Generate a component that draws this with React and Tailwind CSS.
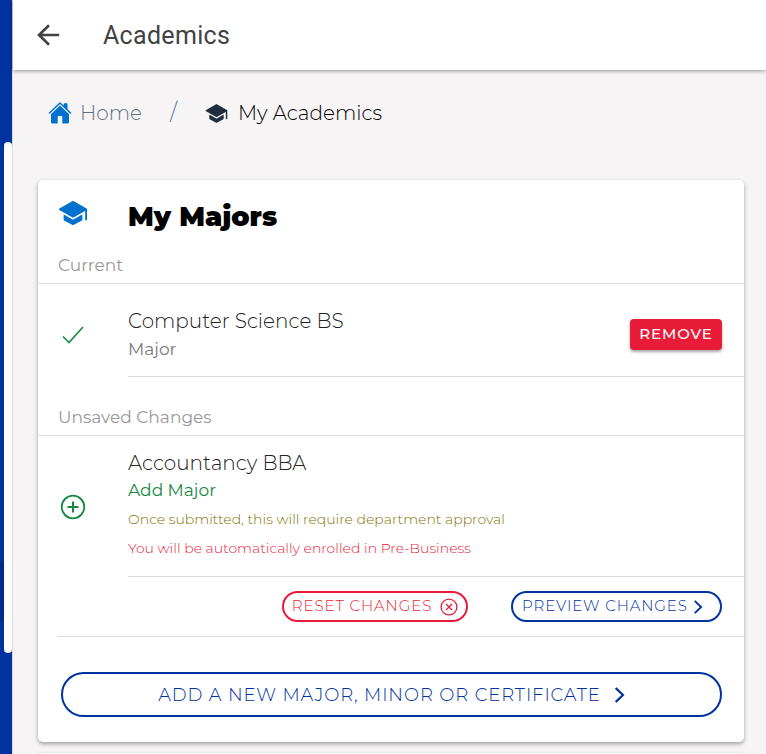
import { IoHome, IoSchool } from 'react-icons/io5';

function ArrowBack() {
  return (
    <svg viewBox="0 0 24 22" className="h-[22px] w-6" fill="none" stroke="currentColor" strokeWidth="2.6">
      <path d="M22.2 11H2M12 1.2L2 11l10 9.8" />
    </svg>
  );
}

function Chevron({ className }) {
  return (
    <svg viewBox="0 0 10 16" className={className} fill="none" stroke="currentColor" strokeWidth="2.2" strokeLinecap="square">
      <path d="M1.5 1.8L8 8l-6.5 6.2" />
    </svg>
  );
}

function Checkmark() {
  return (
    <svg viewBox="0 0 22 18" className="ml-[2px] h-[18px] w-[22px]" fill="none" stroke="currentColor" strokeWidth="1.6">
      <path d="M1 10.5l6 6L21 1" />
    </svg>
  );
}

function AddCircle() {
  return (
    <svg viewBox="0 0 26 26" className="size-[26px]" fill="none" stroke="currentColor" strokeWidth="1.8">
      <circle cx="13" cy="13" r="11.3" />
      <path d="M13 7.5v11M7.5 13h11" strokeWidth="2" />
    </svg>
  );
}

function CloseCircle() {
  return (
    <svg viewBox="0 0 18 18" className="size-[18px]" fill="none" stroke="currentColor" strokeWidth="1.3">
      <circle cx="9" cy="9" r="7.9" />
      <path d="M6 6l6 6M12 6l-6 6" />
    </svg>
  );
}

function Divider({ title }) {
  return (
    <h3 className="flex h-[59px] items-end border-b border-[#dcdcdc] px-5 pb-1 text-[17px] leading-7 font-normal text-[#999]">
      {title}
    </h3>
  );
}

function Item({ icon, children }) {
  return (
    <li className="flex items-center pl-5">
      <span className="flex w-[70px] shrink-0 pl-[2px] text-[#168740]">{icon}</span>
      <div className="flex grow items-center justify-between border-b border-[#dcdcdc] pr-[22px]">{children}</div>
    </li>
  );
}

export default function App() {
  return (
    <div className="flex h-screen overflow-hidden bg-[#f6f4f5] font-['Montserrat','Inter',sans-serif] font-light text-[#222]">
      <aside className="relative w-[13px] shrink-0 border-r border-[#dcdcdc] bg-[#0032a0]">
        <div className="mt-[561px] h-[60px] bg-[#002b88]" />
        <div className="absolute top-[142px] right-0 h-[511px] w-2 rounded-full bg-white" />
      </aside>

      <div className="flex min-w-0 grow flex-col">
        <header className="z-10 flex h-[70px] shrink-0 items-center bg-white px-6 font-['Roboto'] text-[#424242] shadow-[0_1px_4px_rgba(0,0,0,0.4)]">
          <button type="button" aria-label="Back" className="w-[66px]">
            <ArrowBack />
          </button>
          <h1 className="pt-[2px] text-[25px] font-normal tracking-[0.0125em]">Academics</h1>
        </header>

        <main className="pr-[22px] pl-[25px]">
          <nav aria-label="Breadcrumb" className="flex h-[86px] items-center pl-[10px] text-xl">
            <a href="#home" className="flex items-center gap-2 text-[#5f7082]">
              <IoHome size={24} className="text-[#0072ce]" />
              Home
            </a>
            <span className="mx-7 text-[22px] leading-7 text-[#5f7690]">/</span>
            <a href="#academics" aria-current="page" className="flex items-center gap-[10px] text-black">
              <IoSchool size={23} className="text-[#1f2d3d]" />
              My Academics
            </a>
          </nav>

          <section className="mt-6 rounded-[5px] bg-white pb-[25px] shadow-[0_2px_4px_rgba(0,0,0,0.35)]">
            <div className="flex h-[45px] items-start pt-[18px] pl-5">
              <IoSchool size={30} className="mr-10 text-[#0072ce]" />
              <h2 className="text-[27px] leading-[38px] font-black text-black">My Majors</h2>
            </div>

            <Divider title="Current" />
            <ul className="pt-2">
              <Item icon={<Checkmark />}>
                <div className="pt-[14px] pb-[14px]">
                  <p className="text-xl leading-[30px]">Computer Science BS</p>
                  <p className="text-[17px] leading-[26px] font-normal text-[#777]">Major</p>
                </div>
                <button
                  type="button"
                  className="h-[31px] w-[92px] rounded-[4px] bg-[#e81c38] text-[15px] font-medium tracking-[0.06em] text-white shadow-[0_2px_3px_rgba(0,0,0,0.35)]"
                >
                  REMOVE
                </button>
              </Item>
            </ul>

            <Divider title="Unsaved Changes" />
            <ul>
              <Item icon={<AddCircle />}>
                <div className="pt-3 pb-[13px]">
                  <p className="text-xl leading-[30px]">Accountancy BBA</p>
                  <p className="mb-[3px] text-[17px] leading-6 font-normal text-[#168740]">Add Major</p>
                  <p className="text-sm leading-[29px] text-[#7d7400]">Once submitted, this will require department approval</p>
                  <p className="text-sm leading-[29px] text-[#e81c38]">You will be automatically enrolled in Pre-Business</p>
                </div>
              </Item>
            </ul>

            <div className="ml-5 flex h-[60px] items-center justify-end gap-[43px] border-b border-[#dcdcdc] pr-[22px]">
              <button
                type="button"
                className="flex h-[31px] w-[186px] items-center justify-center gap-2 rounded-full border-2 border-[#e81c38] text-[15px] tracking-[0.06em] text-[#e81c38]"
              >
                RESET CHANGES
                <CloseCircle />
              </button>
              <button
                type="button"
                className="flex h-[31px] w-[211px] items-center rounded-full border-2 border-[#0032a0] pl-[9px] gap-[6px] text-[15px] tracking-[0.06em] text-[#0032a0]"
              >
                PREVIEW CHANGES
                <Chevron className="h-[14px] w-[9px]" />
              </button>
            </div>

            <div className="pt-[35px] pr-[22px] pl-[23px]">
              <button
                type="button"
                className="flex h-[45px] w-full items-center justify-center gap-[14px] rounded-full border-2 border-[#0032a0] text-lg tracking-wider text-[#0032a0]"
              >
                ADD A NEW MAJOR, MINOR OR CERTIFICATE
                <Chevron className="h-4 w-[10px]" />
              </button>
            </div>
          </section>

          <section className="mt-[11px] h-10 rounded-[5px] bg-white shadow-[0_2px_4px_rgba(0,0,0,0.35)]" />
        </main>
      </div>
    </div>
  );
}
